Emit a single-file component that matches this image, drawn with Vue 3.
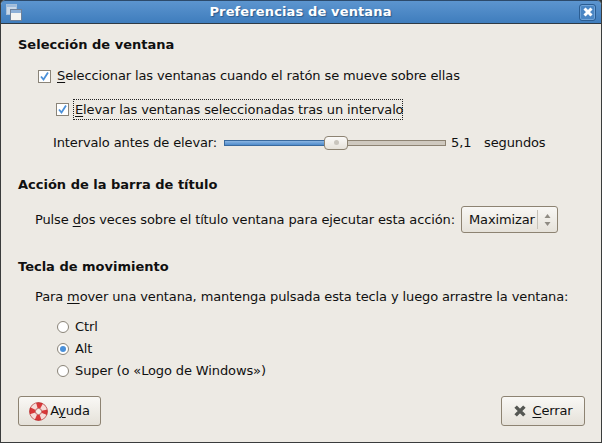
<script setup>
const radios = [
  { label: 'Ctrl', on: false },
  { label: 'Alt', on: true },
  { label: 'Super (o «Logo de Windows»)', on: false },
]
</script>

<template>
  <div class="window">
    <header class="titlebar">
      <svg class="appicon" width="16" height="17" viewBox="0 0 16 17">
        <rect x="0.5" y="0.5" width="10" height="10" fill="#c9d8e8" stroke="#a9c1da" />
        <rect x="1" y="1" width="9" height="2" fill="#9dbbdc" />
        <rect x="4.5" y="5.5" width="11" height="11" fill="#f4f4f2" stroke="#6d8099" />
        <rect x="5" y="6" width="10" height="3" fill="#8db0d8" />
      </svg>
      <div class="title">Preferencias de ventana</div>
      <button class="closebtn" aria-label="Cerrar">
        <svg width="10" height="10" viewBox="0 0 10 10">
          <path d="M1.5 1.5 L8.5 8.5 M8.5 1.5 L1.5 8.5" stroke="#fff" stroke-width="3" />
        </svg>
      </button>
    </header>

    <main class="content">
      <h2 class="h first">Selección de ventana</h2>

      <div class="row r1">
        <span class="check">
          <svg width="11" height="11" viewBox="0 0 11 11"><path d="M2 5.5 L4.5 8.5 L9 1.5" fill="none" stroke="#4a90d9" stroke-width="1.8" /></svg>
        </span>
        <span class="lbl"><u>S</u>eleccionar las ventanas cuando el ratón se mueve sobre ellas</span>
      </div>

      <div class="row r2">
        <span class="check">
          <svg width="11" height="11" viewBox="0 0 11 11"><path d="M2 5.5 L4.5 8.5 L9 1.5" fill="none" stroke="#4a90d9" stroke-width="1.8" /></svg>
        </span>
        <span class="focus"><u>E</u>levar las ventanas seleccionadas tras un intervalo</span>
      </div>

      <div class="row r3">
        <span class="sl-label">Intervalo antes de elevar:</span>
        <div class="slider">
          <div class="fill"></div>
          <div class="thumb"><i></i></div>
        </div>
        <span class="val">5,1</span>
        <span class="unit">segundos</span>
      </div>

      <h2 class="h second">Acción de la barra de título</h2>

      <div class="row r4">
        <span class="r4-text">Pulse <u>d</u>os veces sobre el título ventana para ejecutar esta acción:</span>
        <div class="combo">
          <span class="combo-text">Maximizar</span>
          <span class="sep"></span>
          <svg width="7" height="14" viewBox="0 0 7 14">
            <path d="M3.5 1 L6.5 5 H0.5 Z M3.5 13 L6.5 9 H0.5 Z" fill="#8f8b83" />
          </svg>
        </div>
      </div>

      <h2 class="h third">Tecla de movimiento</h2>

      <p class="para">Para <u>m</u>over una ventana, mantenga pulsada esta tecla y luego arrastre la ventana:</p>

      <div class="radios">
        <div v-for="r in radios" :key="r.label" class="radio-row">
          <span class="radio"><i v-if="r.on"></i></span>
          <span>{{ r.label }}</span>
        </div>
      </div>

      <footer class="actions">
        <button class="btn help">
          <svg width="19" height="19" viewBox="0 0 20 20">
            <circle cx="10" cy="10" r="6.5" fill="none" stroke="#d8383a" stroke-width="6.4" />
            <circle cx="10" cy="10" r="6.5" fill="none" stroke="#f6dcd8" stroke-width="6.4" stroke-dasharray="5.1 5.1" stroke-dashoffset="-2.55" />
            <circle cx="10" cy="10" r="9.4" fill="none" stroke="#a52a2a" stroke-width="0.8" opacity="0.7" />
            <circle cx="10" cy="10" r="3.3" fill="#f3efe9" stroke="#a52a2a" stroke-width="0.7" />
          </svg>
          <span>A<u>y</u>uda</span>
        </button>
        <button class="btn close">
          <svg width="14" height="14" viewBox="0 0 16 16">
            <path d="M3 3 L13 13 M13 3 L3 13" stroke="#555753" stroke-width="4" />
          </svg>
          <span><u>C</u>errar</span>
        </button>
      </footer>
    </main>
  </div>
</template>

<style>
html, body { margin: 0; background: #2e3436; }
</style>

<style scoped>
.window {
  width: 602px;
  height: 443px;
  box-sizing: border-box;
  display: flex;
  flex-direction: column;
  font-family: "DejaVu Sans", sans-serif;
  font-size: 13px;
  line-height: 16px;
  letter-spacing: -0.12px;
  white-space: nowrap;
  color: #101010;
  background: #edeae4;
  border: 1px solid #3a3c3c;
  border-top: 0;
  border-radius: 5px 5px 0 0;
  overflow: hidden;
}
u { text-underline-offset: 2px; text-decoration-thickness: 1px; }
.titlebar {
  height: 22px;
  flex: none;
  margin: 0 -1px;
  display: flex;
  align-items: center;
  background: linear-gradient(#5c95cf, #3f7dbd);
  border-top: 1px solid #2c4a6b;
  border-bottom: 1px solid #2f3a44;
  box-sizing: content-box;
  color: #fff;
  border-radius: 5px 5px 0 0;
}
.appicon { margin-left: 6px; flex: none; }
.title {
  flex: 1;
  text-align: center;
  font-weight: bold;
  letter-spacing: 0.13px;
  text-shadow: 1px 1px 1px #2a5a8c;
}
.closebtn {
  width: 17px;
  height: 17px;
  margin-right: 6px;
  padding: 0;
  display: flex;
  align-items: center;
  justify-content: center;
  background: #4a86c4;
  border: 1px solid #2b5d92;
  box-shadow: inset 0 0 0 1px #6fa3d8;
  border-radius: 3px;
}
.content {
  flex: 1;
  padding: 0 16px 0 17px;
  display: flex;
  flex-direction: column;
}
.h { margin: 0; font-size: 13px; line-height: 16px; font-weight: bold; letter-spacing: 0; }
.first { margin-top: 13px; }
.second { margin-top: 24px; }
.third { margin-top: 26px; }
.row { display: flex; align-items: center; }
.check {
  width: 11px;
  height: 11px;
  flex: none;
  display: flex;
  background: #fff;
  border: 1px solid #8a8478;
}
.r1 { margin: 15px 0 0 20px; }
.r1 .lbl { margin-left: 6px; }
.r2 { margin: 15px 0 0 38px; }
.focus {
  margin-left: 4px;
  padding: 2px 1px;
  border: 1px dotted #222;
  width: 330px;
  box-sizing: border-box;
  height: 21px;
  line-height: 15px;
}
.r3 { margin: 12px 0 0 35px; height: 21px; }
.sl-label { width: 171px; flex: none; }
.slider {
  width: 222px;
  height: 6px;
  box-sizing: border-box;
  position: relative;
  background: #cfc9bf;
  border: 1px solid #8d8372;
  flex: none;
}
.fill {
  width: 100px;
  height: 4px;
  background: linear-gradient(#8bb5e2, #4f8bcb);
  box-shadow: 0 0 0 1px #3a6a9e;
}
.thumb {
  position: absolute;
  left: 99px;
  top: -5px;
  width: 24px;
  height: 14px;
  box-sizing: border-box;
  display: flex;
  align-items: center;
  justify-content: center;
  background: linear-gradient(#fbfaf8, #e6e2da);
  border: 1px solid #8d8372;
  border-radius: 4px;
}
.thumb i { width: 5px; height: 5px; border-radius: 50%; background: #c9c5bd; }
.val { margin-left: 5px; width: 33px; flex: none; }
.r4 { margin: 13px 0 0 17px; height: 27px; justify-content: space-between; padding-right: 27px; }
.combo {
  width: 97px;
  height: 27px;
  box-sizing: border-box;
  display: flex;
  align-items: center;
  background: linear-gradient(#f8f7f4, #e6e2da);
  border: 1px solid #8d8372;
  border-radius: 3px;
  padding-left: 7px;
}
.combo-text { width: 66px; flex: none; }
.sep { width: 1px; height: 19px; background: #c6c1b7; margin: 0 6px 0 2px; }
.para { margin: 14px 0 0 17px; }
.radios { margin: 14px 0 0 39px; display: flex; flex-direction: column; gap: 6px; }
.radio-row { display: flex; align-items: center; gap: 6px; }
.radio {
  width: 12px;
  height: 12px;
  box-sizing: border-box;
  display: flex;
  align-items: center;
  justify-content: center;
  background: #fff;
  border: 1px solid #8a8478;
  border-radius: 50%;
}
.radio i { width: 6px; height: 6px; border-radius: 50%; background: #4a90d9; }
.actions {
  margin-top: 17px;
  display: flex;
  justify-content: space-between;
}
.btn {
  height: 30px;
  box-sizing: border-box;
  display: flex;
  align-items: center;
  justify-content: center;
  gap: 2px;
  font: inherit;
  letter-spacing: inherit;
  color: inherit;
  padding: 0;
  background: linear-gradient(#f9f8f5, #e5e1d9);
  border: 1px solid #8d8372;
  border-radius: 3px;
}
.help { width: 83px; }
.close { width: 84px; gap: 5px; }
</style>
